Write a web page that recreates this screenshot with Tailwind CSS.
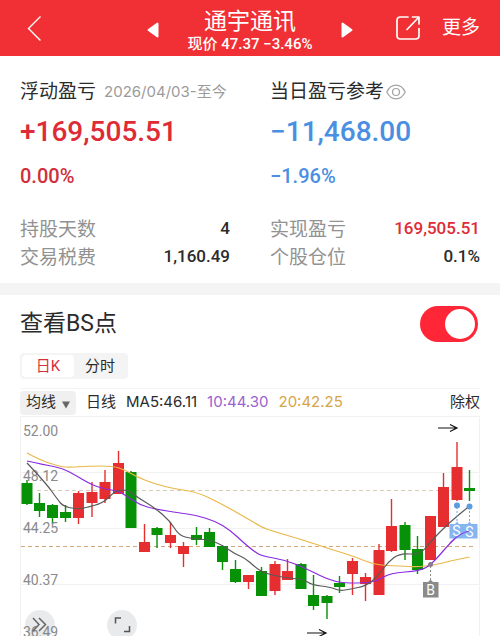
<!DOCTYPE html>
<html lang="zh-CN">

<head>
  <meta charset="UTF-8" />
  <meta name="viewport" content="width=device-width, initial-scale=1.0" />
  <script src="https://cdn.jsdelivr.net/npm/@tailwindcss/browser@4"></script>
  <title>通宇通讯</title>
</head>

<body class="bg-white text-[#2b2b2b] font-['Roboto','Noto_Sans_CJK_SC',sans-serif]">
  <!-- Top bar -->
  <header class="h-14 bg-[#f03035] text-white flex items-center justify-between pl-5 pr-5">
    <button class="w-8 h-8" aria-label="返回">
      <svg class="w-8 h-8" viewBox="0 0 32 32" fill="none" stroke="currentColor" stroke-width="1.4">
        <path d="M20.500 4.500 L8.500 16.500 L20.500 28.500" />
      </svg>
    </button>
    <div class="flex items-center pl-[54px] pt-1">
      <button class="w-6 h-8 flex items-center justify-center" aria-label="上一只">
        <svg class="w-3 h-4" viewBox="0 0 12 16" fill="currentColor" stroke="currentColor" stroke-width="2" stroke-linejoin="round">
          <path d="M10.500 1.500 V14.500 L1.500 8 Z" />
        </svg>
      </button>
      <div class="w-[170px] text-center">
        <h1 class="text-[23px] leading-7">通宇通讯</h1>
        <p class="text-[15px] leading-4 font-medium whitespace-nowrap">现价 47.37 −3.46%</p>
      </div>
      <button class="w-6 h-8 flex items-center justify-center" aria-label="下一只">
        <svg class="w-3 h-4" viewBox="0 0 12 16" fill="currentColor" stroke="currentColor" stroke-width="2" stroke-linejoin="round">
          <path d="M1.500 1.500 V14.500 L10.500 8 Z" />
        </svg>
      </button>
    </div>
    <div class="flex items-center gap-5">
      <button class="w-7 h-7" aria-label="分享">
        <svg class="w-7 h-7" viewBox="0 0 28 28" fill="none" stroke="currentColor" stroke-width="1.700" stroke-linecap="round" stroke-linejoin="round">
          <path d="M14 3 H6.500 Q3 3 3 6.500 V21.500 Q3 25 6.500 25 H21.500 Q25 25 25 21.500 V14.500" />
          <path d="M13 15.500 L24.500 3.500 M18.500 3 H25 V10" />
        </svg>
      </button>
      <button class="text-[19px] leading-7">更多</button>
    </div>
  </header>

  <!-- Profit summary -->
  <section class="grid grid-cols-2 gap-x-10 px-5 pt-[22px] pb-[11px]">
    <div>
      <h2 class="flex items-center text-[19px] leading-7 whitespace-nowrap">浮动盈亏
        <span class="ml-2 text-[15px] text-[#9b9b9b] font-['Inter','Noto_Sans_CJK_SC',sans-serif]">2026/04/03-至今</span>
      </h2>
      <p class="mt-2 text-[28px] leading-9 font-medium text-[#de2b35]">+169,505.51</p>
      <p class="mt-3 text-xl leading-7 font-medium text-[#cf2f3b]">0.00%</p>
      <dl class="mt-[26px] grid grid-cols-[auto_1fr] text-[19px] leading-7">
        <dt class="text-[#929292]">持股天数</dt>
        <dd class="text-right text-[17px] leading-6 font-medium">4</dd>
        <dt class="text-[#929292]">交易税费</dt>
        <dd class="text-right text-[17px] leading-6 font-medium">1,160.49</dd>
      </dl>
    </div>
    <div>
      <h2 class="flex items-center text-[19px] leading-7 whitespace-nowrap">当日盈亏参考
        <svg class="w-5 h-4 ml-0.5" viewBox="0 0 20 16" fill="none" stroke="#a3a3a3" stroke-width="1.200">
          <path d="M0.800 8 C3 3.500 6.300 1.200 10 1.200 S17 3.500 19.200 8 C17 12.500 13.700 14.800 10 14.800 S3 12.500 0.800 8 Z" />
          <circle cx="10" cy="8" r="3.500" />
        </svg>
      </h2>
      <p class="mt-2 text-[28px] leading-9 font-medium text-[#4a8fe2]">−11,468.00</p>
      <p class="mt-3 text-xl leading-7 font-medium text-[#4a8fe2]">−1.96%</p>
      <dl class="mt-[26px] grid grid-cols-[auto_1fr] text-[19px] leading-7">
        <dt class="text-[#929292]">实现盈亏</dt>
        <dd class="text-right text-[17px] leading-6 font-medium text-[#de2b35]">169,505.51</dd>
        <dt class="text-[#929292]">个股仓位</dt>
        <dd class="text-right text-[17px] leading-6 font-medium">0.1%</dd>
      </dl>
    </div>
  </section>

  <div class="h-3 bg-[#f4f4f4]"></div>

  <!-- BS points -->
  <section class="px-5">
    <div class="flex items-center justify-between pt-[11px]">
      <label for="bsToggle" class="text-[23px] leading-9">查看BS点</label>
      <input type="checkbox" id="bsToggle" checked
        class="appearance-none w-[58px] h-9 mr-0.5 rounded-full bg-gray-300 checked:bg-[#ff2638] relative before:absolute before:top-[3px] before:left-[3px] before:size-[30px] before:rounded-full before:bg-white checked:before:left-[25px]" />
    </div>

    <div class="mt-[11px] flex w-fit h-[26px] p-0.5 rounded bg-[#f4f4f4] text-[15px] leading-[22px]">
      <button class="w-[52px] rounded bg-white text-[#d92f3a]">日K</button>
      <button class="w-[52px]">分时</button>
    </div>

    <div class="h-7 flex items-center border-t border-[#f4f4f4] mt-[9px] text-[15px] whitespace-nowrap font-['Inter','Noto_Sans_CJK_SC',sans-serif]">
      <button class="flex items-center gap-1.5 h-6 px-1.5 mr-2.5 rounded-sm bg-[#f0f0f0]">均线
        <svg class="w-2 h-2 mt-1" viewBox="0 0 8 8" fill="#666">
          <path d="M0 0.500 H8 L4 7.500 Z" />
        </svg>
      </button>
      <span>日线</span>
      <span class="ml-2.5">MA5:46.11</span>
      <span class="ml-2.5 text-[#9a62d0]">10:44.30</span>
      <span class="ml-2.5 text-[#d6a545]">20:42.25</span>
      <button class="ml-auto">除权</button>
    </div>

    <div class="relative overflow-hidden">
      <svg id="chart" class="block w-full h-auto" viewBox="20 416 460 220" role="img" aria-label="日K线">
        <g stroke="#f1f1f1">
          <path d="M20 416.500 H479.500 M20 472.500 H479.500 M20 528.500 H479.500 M20 584.500 H479.500 M20.500 416 V636 M479.500 416 V636" />
        </g>
        <path d="M37 490.500 H476" stroke="#d8cdb4" stroke-dasharray="4 3" />
        <path d="M21 546.500 H476" stroke="#d5a678" stroke-dasharray="4 3" />
        <g id="candles"></g>
        <g id="labels" fill="#8a8a8a" font-size="14"></g>
        <g id="lines" fill="none" stroke-width="1.200"></g>

        <!-- High / low arrows -->
        <g fill="none" stroke="#111" stroke-width="1.200">
          <path d="M438 428 H457 M450 424.500 L457 428 L450 431.500" />
          <path d="M307 633 H326 M319 629.500 L326 633 L319 636.500" />
        </g>

        <!-- Buy / sell marks -->
        <g stroke-dasharray="2 2">
          <path d="M430.500 566 V581" stroke="#8a8a8a" />
          <path d="M457 507 V523 M469.500 507 V523" stroke="#6fa8e8" />
        </g>
        <circle cx="430.500" cy="564.500" r="2.500" fill="#8a7a8a" />
        <circle cx="457" cy="505.500" r="3" fill="#5c9ce0" />
        <circle cx="469.500" cy="506.500" r="3" fill="#5c9ce0" />
        <path d="M423 582 H428 L430.500 579.500 L433 582 H438.500 V597.500 H423 Z" fill="#8a8a8a" />
        <path d="M449.500 524 H455 L457 521.500 L459 524 H467.500 L469.500 521.500 L471.500 524 H477.500 V538.500 H449.500 Z" fill="#78aeee" fill-opacity="0.900" />
        <g fill="#fff" font-size="14" text-anchor="middle">
          <text x="430.500" y="595">B</text>
          <text x="456.500" y="536">S</text>
          <text x="469.500" y="537">S</text>
        </g>
        <path d="M450 543 Q461 532 469.500 531" fill="none" stroke="#8a3fe0" stroke-width="1.200" />
      </svg>

      <button class="absolute left-[5px] -bottom-1 size-[30px] rounded-full bg-gray-500/15" aria-label="展开">
        <svg class="size-[30px]" viewBox="0 0 30 30" fill="none" stroke="#666" stroke-width="1.500">
          <path d="M8 8 L14 14.500 L8 21 M14 8 L20.500 14.500 L14 21" />
        </svg>
      </button>
      <button class="absolute left-[87px] -bottom-1 size-[30px] rounded-full bg-gray-500/15" aria-label="全屏">
        <svg class="size-[30px]" viewBox="0 0 30 30" fill="none" stroke="#555" stroke-width="1.500">
          <path d="M8.500 13.500 V8 H14 M22.500 16 V21.500 H17" />
        </svg>
      </button>
    </div>
  </section>

  <script>
    const svgNS = "http://www.w3.org/2000/svg";
    const red = "#e62e31";
    const green = "#079107";

    // x, body top, body bottom, high, low, colour
    const candles = [
      [27, 483, 504, 480, 505, green], [39.5, 503, 511, 493, 517, green],
      [52.5, 505, 518, 504, 524, green], [65.5, 512, 518, 505, 522, green],
      [78.5, 493, 518, 491, 524, red], [92, 492, 503, 482, 517, red],
      [105, 482, 499, 470, 503, red], [118.5, 463, 494, 451, 494, red],
      [131, 472, 528, 471, 528, green], [144.5, 542, 552, 524, 552, red],
      [157, 528, 535, 527, 548, green], [170.5, 535, 543, 522, 548, red],
      [183.5, 546, 554, 542, 567, red], [196.5, 535, 540, 527, 545, green],
      [209.5, 532, 547, 528, 547, green], [222.5, 546, 562, 545, 570, green],
      [235.5, 569, 582, 560, 583, green], [248.5, 575, 582, 575, 589, red],
      [261.5, 571, 596, 567, 596, green], [275, 564, 591, 561, 595, red],
      [287.5, 571, 580, 559, 580, red], [301, 564, 589, 563, 589, green],
      [313.5, 595, 606, 575, 610, green], [327, 596, 603, 595, 619, green],
      [339.5, 583, 587, 576, 593, green], [352.5, 561, 574, 558, 595, red],
      [365.5, 577, 584, 573, 601, red], [379, 550, 595, 544, 595, red],
      [391.5, 526, 551, 499, 552, red], [405, 525, 550, 522, 560, green],
      [417.5, 549, 570, 536, 574, green], [430.5, 516, 560, 516, 560, red],
      [443.5, 487, 527, 473, 527, red], [457, 467, 500, 442, 501, red],
      [469.5, 488, 491, 470, 501, green],
    ];

    const averages = [
      { color: "#e8b84a", points: [[27, 453], [40, 460], [58, 466], [68, 467.5], [90, 466], [113, 466], [125, 470], [137, 477], [155, 484], [175, 489], [197, 492], [222, 504], [255, 523], [265, 529], [300, 539], [330, 549], [353, 556], [375, 565], [400, 566], [417, 567], [435, 565], [450, 561], [469.5, 557]] },
      { color: "#8a2be2", points: [[27, 461], [45, 465], [62, 468], [75, 475], [92, 485], [105, 489], [118, 491], [125, 495], [140, 505], [155, 509], [180, 513], [195, 515], [215, 521], [230, 530], [245, 544], [255, 552], [262, 556], [285, 560], [305, 568], [335, 583], [365, 583], [377, 581], [390, 573], [420, 571], [432, 564], [450, 543], [460, 534], [469.5, 531]] },
      { color: "#5a5a5a", points: [[27, 463], [45, 482], [58, 500], [63, 506], [75, 509], [85, 508], [103, 503], [112, 494], [118, 490], [128, 490], [137, 497], [155, 508], [170, 521], [178, 534], [187, 538], [210, 540], [222, 545], [235, 554], [245, 558], [255, 567], [264, 573], [285, 578], [303, 579], [312, 585], [330, 587], [340, 591], [350, 589], [366, 586], [378, 576], [388, 562], [400, 553], [420, 555], [432, 540], [450, 522], [469.5, 506]] },
    ];

    const labels = [["52.00", 436], ["48.12", 481], ["44.25", 533], ["40.37", 585], ["36.49", 637]];

    function add(parent, tag, attrs) {
      const el = document.createElementNS(svgNS, tag);
      Object.keys(attrs).forEach(key => el.setAttribute(key, attrs[key]));
      document.getElementById(parent).appendChild(el);
      return el;
    }

    // Smooth path through the middle of each pair of points
    function smooth(points) {
      let d = `M${points[0][0]} ${points[0][1]}`;
      for (let i = 1; i < points.length - 1; i++) {
        const [x, y] = points[i];
        const [nx, ny] = points[i + 1];
        d += ` Q${x} ${y} ${(x + nx) / 2} ${(y + ny) / 2}`;
      }
      const last = points[points.length - 1];
      return d + ` L${last[0]} ${last[1]}`;
    }

    labels.forEach(([text, y]) => {
      add("labels", "text", { x: 23, y: y }).textContent = text;
    });

    candles.forEach(([x, top, bottom, high, low, color]) => {
      add("candles", "rect", { x: x - 0.7, y: high, width: 1.4, height: low - high, fill: color });
      add("candles", "rect", { x: x - 5.5, y: top, width: 11, height: bottom - top, fill: color });
    });

    averages.forEach(line => {
      add("lines", "path", { d: smooth(line.points), stroke: line.color });
    });
  </script>
</body>

</html>
